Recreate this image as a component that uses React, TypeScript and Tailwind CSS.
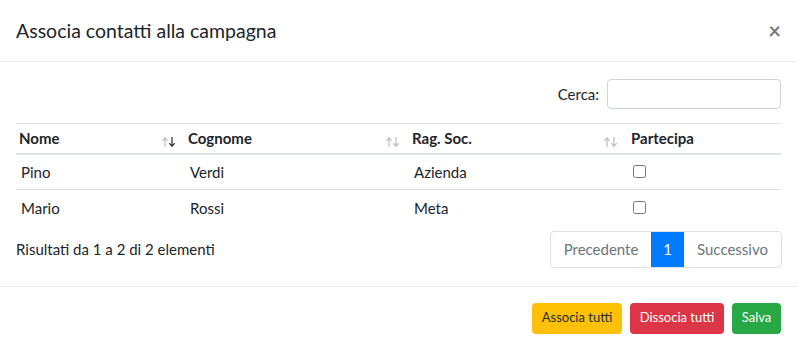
import { useState } from "react";

type Contact = { nome: string; cognome: string; ragSoc: string; partecipa: boolean };

const CONTACTS: Contact[] = [
  { nome: "Pino", cognome: "Verdi", ragSoc: "Azienda", partecipa: false },
  { nome: "Mario", cognome: "Rossi", ragSoc: "Meta", partecipa: false },
];

// up/down sort arrows as drawn by DataTables (active one is solid)
function SortArrows({ active }: { active?: "asc" | "desc" }) {
  return (
    <svg width="14" height="10" viewBox="0 0 14 10" className="shrink-0">
      <g
        fill="none"
        strokeWidth="1.2"
        strokeLinecap="round"
        strokeLinejoin="round"
        stroke="#212529"
      >
        <g opacity={active === "asc" ? 1 : 0.3}>
          <path d="M3 9.5V1" />
          <path d="M0.8 3.4L3 1l2.2 2.4" />
        </g>
        <g opacity={active === "desc" ? 1 : 0.3}>
          <path d="M10 0.5V9" />
          <path d="M7.6 6.6L10 9l2.4-2.4" />
        </g>
      </g>
    </svg>
  );
}

const font = "font-['Lato','Liberation_Sans',sans-serif]";

export default function App() {
  const [rows, setRows] = useState(CONTACTS);

  const toggle = (i: number) =>
    setRows((r) => r.map((c, j) => (j === i ? { ...c, partecipa: !c.partecipa } : c)));

  return (
    <div className={`${font} h-[351px] w-[797px] bg-white text-[#212529]`}>
      <div className="flex h-[62px] items-center justify-between border-b border-[#e9ecef] pl-4 pr-[16px]">
        <h4 className="text-[19.5px] leading-none text-[#212529]">Associa contatti alla campagna</h4>
        <button className="text-[22px] font-bold leading-none text-[#212529] opacity-60">×</button>
      </div>

      <div className="px-4 pt-[17px] pb-[18px]">
        <div className="flex items-center justify-end gap-2">
          <label className="text-[15px] text-[#212529]">Cerca:</label>
          <input
            type="search"
            className="h-[30px] w-[174px] rounded border border-[#ced4da] px-2 text-sm outline-none"
          />
        </div>

        <table className="mt-[14px] w-full table-fixed border-collapse border-t border-[#dee2e6] text-[15px]">
          <colgroup>
            <col className="w-[169px]" />
            <col className="w-[224px]" />
            <col className="w-[219px]" />
            <col />
          </colgroup>
          <thead>
            <tr className="h-[30px] border-b-2 border-[#dee2e6]">
              <th className="pl-[3px] pr-[9px] text-left font-bold">
                <div className="flex items-center justify-between">
                  <span>Nome</span>
                  <span className="pt-[8px]">
                    <SortArrows active="desc" />
                  </span>
                </div>
              </th>
              <th className="pl-[3px] pr-[9px] text-left font-bold">
                <div className="flex items-center justify-between">
                  <span>Cognome</span>
                  <span className="pt-[8px]">
                    <SortArrows />
                  </span>
                </div>
              </th>
              <th className="pl-[3px] pr-[10px] text-left font-bold">
                <div className="flex items-center justify-between">
                  <span>Rag. Soc.</span>
                  <span className="pt-[8px]">
                    <SortArrows />
                  </span>
                </div>
              </th>
              <th className="pl-[3px] text-left font-bold">Partecipa</th>
            </tr>
          </thead>
          <tbody>
            {rows.map((c, i) => (
              <tr key={c.nome} className="h-[36px] border-t border-[#dee2e6] first:border-t-0">
                <td className="pl-[5px]">{c.nome}</td>
                <td className="pl-[5px]">{c.cognome}</td>
                <td className="pl-[5px]">{c.ragSoc}</td>
                <td className="pl-[5px]">
                  <input
                    type="checkbox"
                    checked={c.partecipa}
                    onChange={() => toggle(i)}
                    className="block h-[13px] w-[13px]"
                  />
                </td>
              </tr>
            ))}
          </tbody>
        </table>

        <div className="mt-[5px] flex items-center justify-between">
          <div className="text-[15px]">Risultati da 1 a 2 di 2 elementi</div>
          <div className="mr-[-1px] flex h-[37px] overflow-hidden rounded border border-[#dee2e6] text-[15px] text-[#6c757d]">
            <button className="w-[100px] text-center">Precedente</button>
            <button className="w-[33px] bg-[#007bff] text-center text-white">1</button>
            <button className="w-[97px] text-center">Successivo</button>
          </div>
        </div>
      </div>

      <div className="flex justify-end gap-2 border-t border-[#e9ecef] px-4 pt-4">
        <button className="h-[31px] w-[90px] rounded bg-[#ffc107] text-[13px] text-[#1f2d3d]">
          Associa tutti
        </button>
        <button className="h-[31px] w-[94px] rounded bg-[#dc3545] text-[13px] text-white">
          Dissocia tutti
        </button>
        <button className="h-[31px] w-[49px] rounded bg-[#28a745] text-[13px] text-white">
          Salva
        </button>
      </div>
    </div>
  );
}
